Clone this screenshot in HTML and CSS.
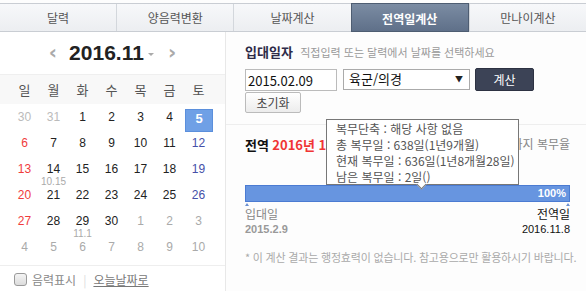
FILE: index.html
```html
<!DOCTYPE html>
<html lang="ko">
<head>
  <meta charset="UTF-8" />
  <title>전역일계산</title>
  <link rel="stylesheet" href="styles.css">
</head>
<body>
  <div class="tabs">
    <div class="tab">달력</div>
    <div class="tab">양음력변환</div>
    <div class="tab">날짜계산</div>
    <div class="tab active">전역일계산</div>
    <div class="tab">만나이계산</div>
  </div>

  <div class="main">
    <div class="cal">
      <div class="cal-head">
        <span class="arrow">&lsaquo;</span>
        <span class="ym">2016.11</span>
        <span class="caret"></span>
        <span class="arrow">&rsaquo;</span>
      </div>
      <div class="week">
        <span>일</span><span>월</span><span>화</span><span>수</span><span>목</span><span>금</span><span>토</span>
      </div>
      <div class="days">
        <div class="day other">30</div>
        <div class="day other">31</div>
        <div class="day">1</div>
        <div class="day">2</div>
        <div class="day">3</div>
        <div class="day">4</div>
        <div class="day sel">5</div>

        <div class="day sun">6</div>
        <div class="day">7</div>
        <div class="day">8</div>
        <div class="day">9</div>
        <div class="day">10</div>
        <div class="day">11</div>
        <div class="day sat">12</div>

        <div class="day sun">13</div>
        <div class="day">14<small>10.15</small></div>
        <div class="day">15</div>
        <div class="day">16</div>
        <div class="day">17</div>
        <div class="day">18</div>
        <div class="day sat">19</div>

        <div class="day sun">20</div>
        <div class="day">21</div>
        <div class="day">22</div>
        <div class="day">23</div>
        <div class="day">24</div>
        <div class="day">25</div>
        <div class="day sat">26</div>

        <div class="day sun">27</div>
        <div class="day">28</div>
        <div class="day">29<small>11.1</small></div>
        <div class="day">30</div>
        <div class="day next">1</div>
        <div class="day next">2</div>
        <div class="day next">3</div>

        <div class="day next">4</div>
        <div class="day next">5</div>
        <div class="day next">6</div>
        <div class="day next">7</div>
        <div class="day next">8</div>
        <div class="day next">9</div>
        <div class="day next">10</div>
      </div>
      <div class="cal-foot">
        <span class="check"></span>
        <span class="lunar">음력표시</span>
        <span class="bar">|</span>
        <a class="today">오늘날짜로</a>
      </div>
    </div>

    <div class="calc">
      <div class="form">
        <div class="form-title"><b>입대일자</b> <span>직접입력 또는 달력에서 날짜를 선택하세요</span></div>
        <div class="form-row">
          <div class="input">2015.02.09</div>
          <div class="select">육군/의경<span class="tri">&#9660;</span></div>
          <div class="btn">계산</div>
        </div>
        <div class="btn-reset">초기화</div>
      </div>

      <div class="result">
        <div class="result-title">
          <span><b>전역</b> <span class="red">2016년 11월 8일</span></span>
          <span>까지 복무율</span>
        </div>
        <div class="tip">
          <div>복무단축 : 해당 사항 없음</div>
          <div>총 복무일 : 638일(1년9개월)</div>
          <div>현재 복무일 : 636일(1년8개월28일)</div>
          <div>남은 복무일 : 2일()</div>
        </div>
        <div class="progress"><div class="fill" style="width: 100%">100%</div></div>
        <div class="ends">
          <div class="end start"><span>입대일</span><b>2015.2.9</b></div>
          <div class="end finish"><span>전역일</span><b>2016.11.8</b></div>
        </div>
        <p class="note">* 이 계산 결과는 행정효력이 없습니다. 참고용으로만 활용하시기 바랍니다.</p>
      </div>
    </div>
  </div>
</body>
</html>
```

FILE: styles.css
```css
body {
  margin: 0;
  width: 586px;
  height: 291px;
  overflow: hidden;
  background: #fdfdfd;
  font-family: "Noto Sans CJK KR", "Noto Sans", sans-serif;
  font-size: 12px;
  color: #333;
}
.tabs {
  display: flex;
  margin-top: 3px;
  height: 27px;
  border-top: 1px solid #c9cdd3;
  border-bottom: 1px solid #c9cdd3;
  background: linear-gradient(#f7f8fa, #eceef1);
}
.tab {
  flex: 1;
  text-align: center;
  line-height: 27px;
  color: #555;
  border-left: 1px solid #d3d7dc;
}
.tab:first-child {
  border-left: none;
}
.tab.active {
  margin: -1px 0 -1px 0;
  line-height: 29px;
  background: linear-gradient(#7b8ca3, #5f7089);
  border: 1px solid #4e5d72;
  color: #fff;
  font-weight: bold;
}
.main {
  display: flex;
}
.cal {
  flex: none;
  width: 225px;
  height: 259px;
  background: #fff;
  border-right: 1px solid #e8e8e8;
}
.cal-head {
  display: flex;
  align-items: center;
  justify-content: center;
  height: 42px;
  gap: 6px;
}
.arrow {
  font-family: "DejaVu Sans", sans-serif;
  font-size: 20px;
  font-weight: bold;
  color: #aaa;
  padding: 0 6px;
  margin-top: -3px;
}
.ym {
  font-family: "Liberation Sans", sans-serif;
  font-size: 21px;
  font-weight: bold;
  color: #222;
}
.caret {
  width: 0;
  height: 0;
  border-left: 3px solid transparent;
  border-right: 3px solid transparent;
  border-top: 3px solid #aaa;
  margin: 2px 2px 0 -2px;
}
.week {
  display: grid;
  grid-template-columns: repeat(7, 29px);
  padding-left: 10px;
  height: 29px;
  line-height: 29px;
  background: #f8f8f8;
  border-top: 1px solid #efefef;
  text-align: center;
  font-size: 13px;
  color: #555;
}
.days {
  display: grid;
  grid-template-columns: repeat(7, 29px);
  grid-auto-rows: 26px;
  padding: 5px 0 0 10px;
  height: 156px;
}
.day {
  text-align: center;
  font-family: "Liberation Sans", sans-serif;
  font-size: 12px;
  line-height: 14px;
  padding-top: 1px;
  color: #222;
}
.day small {
  display: block;
  font-size: 10px;
  line-height: 11px;
  color: #aaa;
}
.day.other {
  color: #bbb;
}
.day.next {
  color: #aaa;
}
.day.sun {
  color: #f03c3c;
}
.day.sat {
  color: #4550a8;
}
.day.sel {
  width: 28px;
  height: 23px;
  background: #6fa0e6;
  border: 1px solid #5b8fdc;
  box-sizing: border-box;
  color: #fff;
  font-weight: bold;
  font-size: 13px;
  padding-top: 2px;
  margin-left: 1px;
}
.cal-foot {
  display: flex;
  align-items: center;
  height: 26px;
  padding-left: 14px;
  border-top: 1px solid #eee;
  color: #888;
  font-size: 12px;
}
.check {
  width: 11px;
  height: 11px;
  border: 1px solid #9a9a9a;
  border-radius: 3px;
  background: linear-gradient(#f4f4f4, #dcdcdc);
  margin-right: 5px;
}
.bar {
  color: #ddd;
  margin: 0 7px;
}
.today {
  color: #777;
  text-decoration: underline;
}
.calc {
  flex: 1;
  min-width: 0;
  position: relative;
}
.form {
  height: 82px;
  padding: 10px 0 0 19px;
  border-bottom: 1px solid #eee;
}
.form-title b {
  font-size: 13px;
  color: #2e2b48;
}
.form-title span {
  font-size: 11px;
  color: #999;
  margin-left: 4px;
}
.form-row {
  display: flex;
  align-items: center;
  margin-top: 7px;
}
.input {
  width: 88px;
  height: 20px;
  line-height: 22px;
  border: 1px solid #bbb;
  background: #fff;
  padding-left: 2px;
  font-size: 13px;
  color: #111;
}
.select {
  position: relative;
  width: 120px;
  height: 19px;
  line-height: 18px;
  border: 1px solid #aaa;
  background: #fff;
  margin-left: 6px;
  padding-left: 5px;
  font-size: 13px;
  color: #111;
}
.tri {
  position: absolute;
  right: 6px;
  top: 0;
  font-size: 8px;
  color: #222;
}
.btn {
  width: 57px;
  height: 21px;
  line-height: 21px;
  margin-left: 5px;
  background: #3c4356;
  border: 1px solid #2d3242;
  border-radius: 2px;
  color: #fff;
  text-align: center;
  font-size: 12px;
}
.btn-reset {
  width: 54px;
  height: 19px;
  line-height: 19px;
  margin-top: 1px;
  border: 1px solid #bbb;
  border-radius: 2px;
  background: linear-gradient(#fff, #ececec);
  text-align: center;
  color: #444;
  font-size: 12px;
}
.result {
  padding: 10px 16px 0 19px;
}
.result-title {
  display: flex;
  justify-content: space-between;
  white-space: nowrap;
  font-size: 12px;
  color: #888;
}
.result-title b {
  color: #111;
  font-size: 13px;
}
.red {
  color: #f03535;
  font-weight: bold;
  font-size: 13px;
}
.tip {
  position: absolute;
  left: 100px;
  top: 87px;
  width: 182px;
  height: 61px;
  padding: 1px 0 2px 9px;
  border: 1px solid #777;
  background: #fff;
  color: #555;
  font-size: 12px;
  line-height: 16px;
  white-space: nowrap;
}
.tip::after {
  content: "";
  position: absolute;
  left: 91px;
  bottom: -4px;
  width: 6px;
  height: 6px;
  background: #fff;
  border-right: 1px solid #777;
  border-bottom: 1px solid #777;
  transform: rotate(45deg);
}
.progress {
  margin-top: 31px;
  height: 15px;
  border: 1px solid #4b7bd2;
  background: #eef2f8;
}
.fill {
  height: 15px;
  line-height: 15px;
  background: #6795e0;
  color: #fff;
  font-family: "Liberation Sans", sans-serif;
  font-weight: bold;
  font-size: 11px;
  text-align: right;
  padding-right: 3px;
  box-sizing: border-box;
}
.ends {
  display: flex;
  justify-content: space-between;
  margin-top: 1px;
}
.end {
  position: relative;
  display: flex;
  flex-direction: column;
  padding-top: 3px;
}
.end::before {
  content: "";
  position: absolute;
  top: 0;
  width: 0;
  height: 0;
  border-left: 2px solid transparent;
  border-right: 2px solid transparent;
  border-bottom: 3px solid #6b8fd0;
}
.end.start::before {
  left: 0;
}
.end.finish::before {
  right: 0;
}
.end.finish {
  align-items: flex-end;
}
.end span {
  font-size: 12px;
  line-height: 16px;
  color: #888;
}
.end b {
  font-family: "Liberation Sans", sans-serif;
  font-size: 11px;
  line-height: 14px;
  color: #999;
}
.end.finish span,
.end.finish b {
  color: #111;
  font-weight: normal;
}
.note {
  margin: 13px 0 0;
  font-size: 11px;
  letter-spacing: -0.2px;
  color: #aaa;
  white-space: nowrap;
}
```
